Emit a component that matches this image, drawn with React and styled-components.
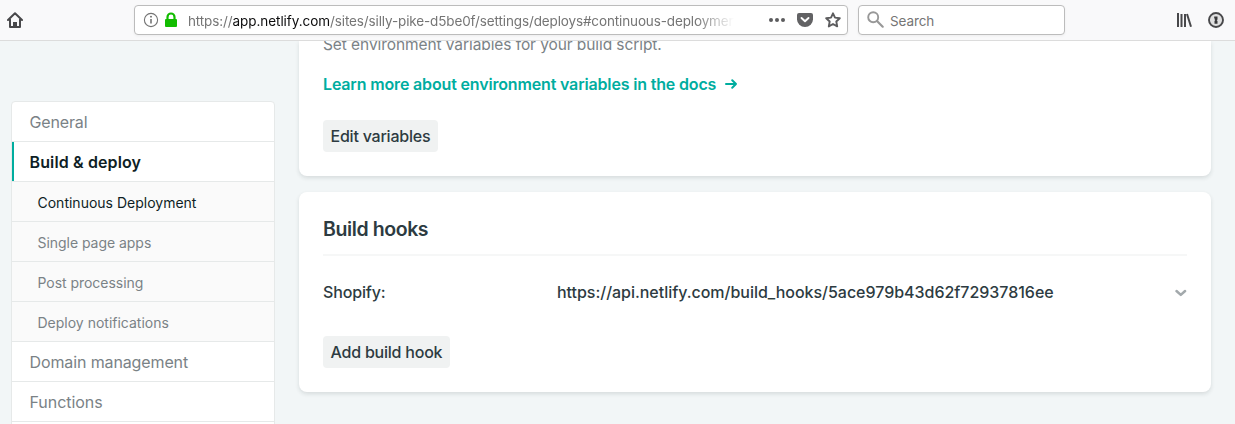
import React from 'react';
import styled, { createGlobalStyle } from 'styled-components';

const GlobalStyle = createGlobalStyle`
  *, *::before, *::after { box-sizing: border-box; }
  html, body { margin: 0; }
  body {
    background: #f2f6f7;
    font-family: Inter, "Liberation Sans", sans-serif;
    overflow: hidden;
  }
`;

const Window = styled.div`
  display: flex;
  flex-direction: column;
  height: 424px;
  overflow: hidden;
`;

const Toolbar = styled.header`
  flex: none;
  display: flex;
  align-items: center;
  height: 41px;
  padding: 0 11px 1px 7px;
  background: #f9f9fa;
  border-bottom: 1px solid #dcdcdc;
`;

const Field = styled.div`
  display: flex;
  align-items: center;
  width: ${(p) => p.$width}px;
  height: 30px;
  margin-left: ${(p) => p.$offset}px;
  padding: 0 6px 0 8px;
  background: #fff;
  border: 1px solid #bcbcbc;
  border-radius: 4px;
  box-shadow: 0 1px 3px rgba(0, 0, 0, 0.05);
`;

const Icon = styled.svg`
  display: block;
  flex: none;
  margin-left: ${(p) => p.$gap || 0}px;
`;

const Address = styled.div`
  width: 547px;
  margin-left: 10px;
  padding-top: 2px;
  overflow: hidden;
  white-space: nowrap;
  font-size: 13.5px;
  letter-spacing: -0.13px;
  line-height: 20px;
  color: #757575;
  mask-image: linear-gradient(to right, #000 508px, transparent 546px);
`;

const Host = styled.span`
  color: #0c0c0d;
  letter-spacing: -0.05px;
`;

const Placeholder = styled.span`
  margin-left: 6px;
  padding-top: 2px;
  font-size: 13.5px;
  letter-spacing: -0.1px;
  color: #757575;
`;

const Tools = styled.div`
  display: flex;
  align-items: center;
  gap: 16px;
  margin-left: auto;
`;

const Page = styled.div`
  flex: 1;
  min-height: 0;
  display: flex;
  align-items: flex-start;
  gap: 24px;
  padding: 0 24px 0 11px;
  overflow: hidden;
`;

const Sidebar = styled.nav`
  flex: none;
  width: 264px;
  margin-top: 60px;
  background: #fff;
  border: 1px solid #e6e9e9;
  border-radius: 4px;
`;

const NavItem = styled.a`
  display: flex;
  align-items: center;
  height: 40px;
  padding-left: ${(p) => (p.$sub ? 25.5 : 17.5)}px;
  padding-top: 1px;
  background: ${(p) => (p.$sub ? '#fafafa' : 'transparent')};
  border-bottom: 1px solid #e6e9e9;
  box-shadow: ${(p) => (p.$marked ? 'inset 2px 0 #00ad9f' : 'none')};
  color: ${(p) => (p.$active ? '#0e1e25' : '#7a8286')};
  font-size: ${(p) => (p.$sub ? 14 : 16)}px;
  font-weight: ${(p) => (p.$marked ? 600 : 400)};
  letter-spacing: ${(p) => p.$track || 0}px;
  white-space: nowrap;
`;

const Content = styled.main`
  flex: 1;
  display: flex;
  flex-direction: column;
  gap: 16px;
`;

const Card = styled.section`
  background: #fff;
  padding: ${(p) => (p.$cut ? '0 24px 24px' : '24px')};
  border-radius: ${(p) => (p.$cut ? '0 0 8px 8px' : '8px')};
  box-shadow: 0 2px 4px rgba(14, 30, 37, 0.12);
`;

const Description = styled.p`
  margin: -8px 0 0;
  font-size: 15.5px;
  line-height: 24px;
  letter-spacing: -0.08px;
  color: #7a8286;
`;

const DocsLink = styled.a`
  display: flex;
  align-items: center;
  margin-top: 15px;
  height: 24px;
  color: #00ad9f;
  font-size: 16px;
  font-weight: 600;
  letter-spacing: -0.16px;
`;

const Button = styled.button`
  display: block;
  height: 32px;
  margin: ${(p) => p.$top}px 0 0;
  padding: 0 0 0 7.5px;
  width: ${(p) => p.$width}px;
  border: 0;
  border-radius: 4px;
  background: #f0f2f2;
  color: #2d3b41;
  font: 500 16px/32px Inter, "Liberation Sans", sans-serif;
  letter-spacing: -0.22px;
  text-align: left;
  white-space: nowrap;
`;

const Title = styled.h2`
  margin: 0;
  height: 40px;
  border-bottom: 2px solid #f6f7f7;
  color: #2d3b41;
  font-size: 19.5px;
  font-weight: 600;
  line-height: 26px;
  letter-spacing: -0.4px;
`;

const HookRow = styled.div`
  display: flex;
  align-items: center;
  height: 24px;
  margin-top: 24px;
  color: #2d3b41;
  font-size: 16px;
  font-weight: 500;
`;

const HookName = styled.span`
  width: 234px;
  letter-spacing: -0.15px;
`;

const HookUrl = styled.span`
  flex: 1;
  letter-spacing: -0.03px;
`;

const NAV = [
  { label: 'General', track: -0.15 },
  { label: 'Build & deploy', active: true, marked: true, track: 0.13 },
  { label: 'Continuous Deployment', sub: true, active: true, track: 0 },
  { label: 'Single page apps', sub: true, track: -0.04 },
  { label: 'Post processing', sub: true, track: -0.04 },
  { label: 'Deploy notifications', sub: true, track: 0 },
  { label: 'Domain management', track: -0.12 },
  { label: 'Functions', track: -0.05 },
  { label: '' },
];

export default function App() {
  return (
    <Window>
      <GlobalStyle />
      <Toolbar>
        <Icon width="16" height="16" viewBox="0 0 16 16" fill="none" stroke="#48484a" strokeWidth="2" strokeLinecap="round" strokeLinejoin="round">
          <path d="M1 8 8 1.3 15 8M3 7.5V15h10V7.5" />
          <path d="M6 15.5V10h4v5.500Z" fill="#48484a" stroke="none" />
        </Icon>
        <Field $width={714} $offset={111}>
          <Icon width="16" height="16" viewBox="0 0 16 16">
            <circle cx="8" cy="8" r="6.6" fill="none" stroke="#737373" strokeWidth="1.1" />
            <path d="M8 7v4.5" stroke="#606060" strokeWidth="1.4" />
            <circle cx="8" cy="4.7" r="0.9" fill="#606060" />
          </Icon>
          <Icon $gap={5} width="14" height="16" viewBox="0 0 14 16">
            <path d="M3.5 8V5a3.5 3.5 0 0 1 7 0v3" fill="none" stroke="#12bc00" strokeWidth="2.2" />
            <rect x="1" y="7" width="12" height="8" rx="1" fill="#12bc00" />
          </Icon>
          <Address>
            https://<Host>app.netlify.com</Host>/sites/silly-pike-d5be0f/settings/deploys#continuous-deployment
          </Address>
          <Icon $gap={33} width="18" height="16" viewBox="0 0 18 16" fill="#5c5c5e">
            <circle cx="3" cy="8" r="2" />
            <circle cx="9" cy="8" r="2" />
            <circle cx="15" cy="8" r="2" />
          </Icon>
          <Icon $gap={11} width="16" height="16" viewBox="0 0 16 16">
            <path d="M2 1h12a2 2 0 0 1 2 2v4.3a8 7.7 0 0 1-16 0V3a2 2 0 0 1 2-2Z" fill="#626264" />
            <path d="m4.5 6 3.5 3.3L11.5 6" fill="none" stroke="#fff" strokeWidth="1.9" strokeLinecap="round" strokeLinejoin="round" />
          </Icon>
          <Icon $gap={12} width="16" height="16" viewBox="0 0 16 16">
            <path d="m8 1.3 2 4.3 4.8.6-3.5 3.3.9 4.9L8 12l-4.2 2.4.9-4.9L1.2 6.2 6 5.6Z" fill="none" stroke="#5c5c5e" strokeWidth="1.9" strokeLinejoin="round" />
          </Icon>
        </Field>
        <Field $width={207} $offset={10}>
          <Icon width="17" height="17" viewBox="0 0 17 17" fill="none" stroke="#989898">
            <circle cx="6.2" cy="6.2" r="5" strokeWidth="1.9" />
            <path d="m10 10 5.700 5.700" strokeWidth="2.2" strokeLinecap="round" />
          </Icon>
          <Placeholder>Search</Placeholder>
        </Field>
        <Tools>
          <Icon width="16" height="16" viewBox="0 0 16 16" fill="none" stroke="#48484a" strokeWidth="2">
            <path d="M2 1v14M5.5 2v13M9 2v13M11 2l4 12.7" />
          </Icon>
          <Icon width="16" height="16" viewBox="0 0 16 16">
            <circle cx="8" cy="8" r="7" fill="#e0e0e0" stroke="#48484a" strokeWidth="1.9" />
            <path d="M6.200 4.500h3.300v3l-.8.700.8.800V11.800H6.500V9l.8-.9-.8-.8V6h-.3Z" fill="#38383a" />
          </Icon>
        </Tools>
      </Toolbar>
      <Page>
        <Sidebar>
          {NAV.map((n, i) => (
            <NavItem key={i} $sub={n.sub} $active={n.active} $marked={n.marked} $track={n.track}>
              {n.label}
            </NavItem>
          ))}
        </Sidebar>
        <Content>
          <Card $cut>
            <Description>Set environment variables for your build script.</Description>
            <DocsLink>
              Learn more about environment variables in the docs
              <Icon $gap={8} width="14" height="12" viewBox="0 0 14 12" fill="none" stroke="#00ad9f" strokeWidth="2" strokeLinecap="round" strokeLinejoin="round">
                <path d="M2 6h10M8.2 2.2 12 6 8.2 9.8" />
              </Icon>
            </DocsLink>
            <Button $top={24} $width={115}>Edit variables</Button>
          </Card>
          <Card>
            <Title>Build hooks</Title>
            <HookRow>
              <HookName>Shopify:</HookName>
              <HookUrl>https://api.netlify.com/build_hooks/5ace979b43d62f72937816ee</HookUrl>
              <Icon width="13" height="10" viewBox="0 0 13 10" fill="none" stroke="#a3a9ac" strokeWidth="2.5" strokeLinecap="round" strokeLinejoin="round">
                <path d="m2.500 4 4.300 3.900L11.100 4" />
              </Icon>
            </HookRow>
            <Button $top={32} $width={127}>Add build hook</Button>
          </Card>
        </Content>
      </Page>
    </Window>
  );
}
